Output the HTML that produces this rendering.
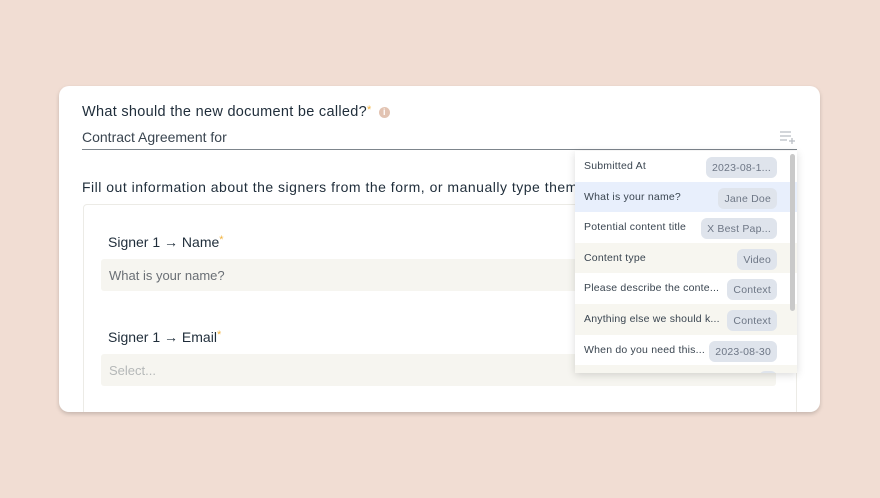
<!DOCTYPE html>
<html><head><style>
*{box-sizing:border-box;margin:0;padding:0}
body{width:880px;height:498px;background:#f1ddd3;font-family:"Liberation Sans",sans-serif;position:relative;overflow:hidden;color:#1f2d3a}
.card{position:absolute;left:59px;top:86px;width:761px;height:326px;background:#fff;border-radius:10px;box-shadow:0 2px 4px rgba(0,0,0,.18);overflow:hidden}
.abs{position:absolute}
.star{color:#f2b441;font-size:11px;vertical-align:top}
.inner{position:absolute;left:24px;top:118px;width:714px;height:240px;border:1px solid #ecebe6;border-radius:4px}
.inp{position:absolute;left:42px;width:675px;height:32px;background:#f6f5f0;border-radius:3px;font-size:13px;padding:9px 8px;color:#6a6f75}
.dd{position:absolute;left:575px;top:151px;width:222px;height:222px;background:#fff;box-shadow:0 2px 8px rgba(0,0,0,.15);overflow:hidden}
.row{height:30.6px;position:relative;font-size:10.5px;color:#3a4550;padding:9px 0 0 9px;letter-spacing:.2px}
.row .p{position:absolute;right:20px;top:6px;height:21px;background:#dfe4ec;border-radius:6px;font-size:10.5px;color:#6e7786;padding:5px 6px}
</style></head><body>
<div class="card">
 <div class="abs" style="left:23px;top:18px;font-size:14.5px;letter-spacing:.3px">What should the new document be called?<span class="star">*</span> <span style="display:inline-block;width:11px;height:11px;border-radius:50%;background:#e2c3b2;vertical-align:1px;margin-left:3px;color:#fff;font-size:9px;line-height:11px;text-align:center;font-weight:bold">i</span></div>
 <div class="abs" style="left:23px;top:43px;font-size:14px;color:#3a4550">Contract Agreement for</div>
 <div class="abs" style="left:23px;top:63px;width:715px;height:1px;background:#7d858c"></div>
 <svg class="abs" style="left:720px;top:44px" width="18" height="14" viewBox="0 0 18 14"><path d="M1 2h11M1 6h11M1 10h7M13 8v6M10 11h6" stroke="#b9bec4" stroke-width="1.3" fill="none"/></svg>
 <div class="abs" style="left:23px;top:93px;font-size:14px;white-space:nowrap;letter-spacing:.5px">Fill out information about the signers from the form, or manually type them</div>
 <div class="inner"></div>
 <div class="abs" style="left:49px;top:148px;font-size:14px">Signer 1 → Name<span class="star">*</span></div>
 <div class="inp" style="top:173px">What is your name?</div>
 <div class="abs" style="left:49px;top:243px;font-size:14px">Signer 1 → Email<span class="star">*</span></div>
 <div class="inp" style="top:268px;color:#b5b8b8">Select...</div>
</div>
<div class="dd">
 <div class="row">Submitted At<span class="p">2023-08-1...</span></div>
 <div class="row" style="background:#e8effc">What is your name?<span class="p">Jane Doe</span></div>
 <div class="row">Potential content title<span class="p">X Best Pap...</span></div>
 <div class="row" style="background:#f7f6f0">Content type<span class="p">Video</span></div>
 <div class="row">Please describe the conte...<span class="p">Context</span></div>
 <div class="row" style="background:#f7f6f0">Anything else we should k...<span class="p">Context</span></div>
 <div class="row">When do you need this...<span class="p">2023-08-30</span></div>
 <div class="row" style="background:#f7f6f0"><span class="p" style="width:18px"></span></div>
 <div class="abs" style="right:2px;top:3px;width:5px;height:157px;background:#c9c9c9;border-radius:3px"></div>
</div>
</body></html>
